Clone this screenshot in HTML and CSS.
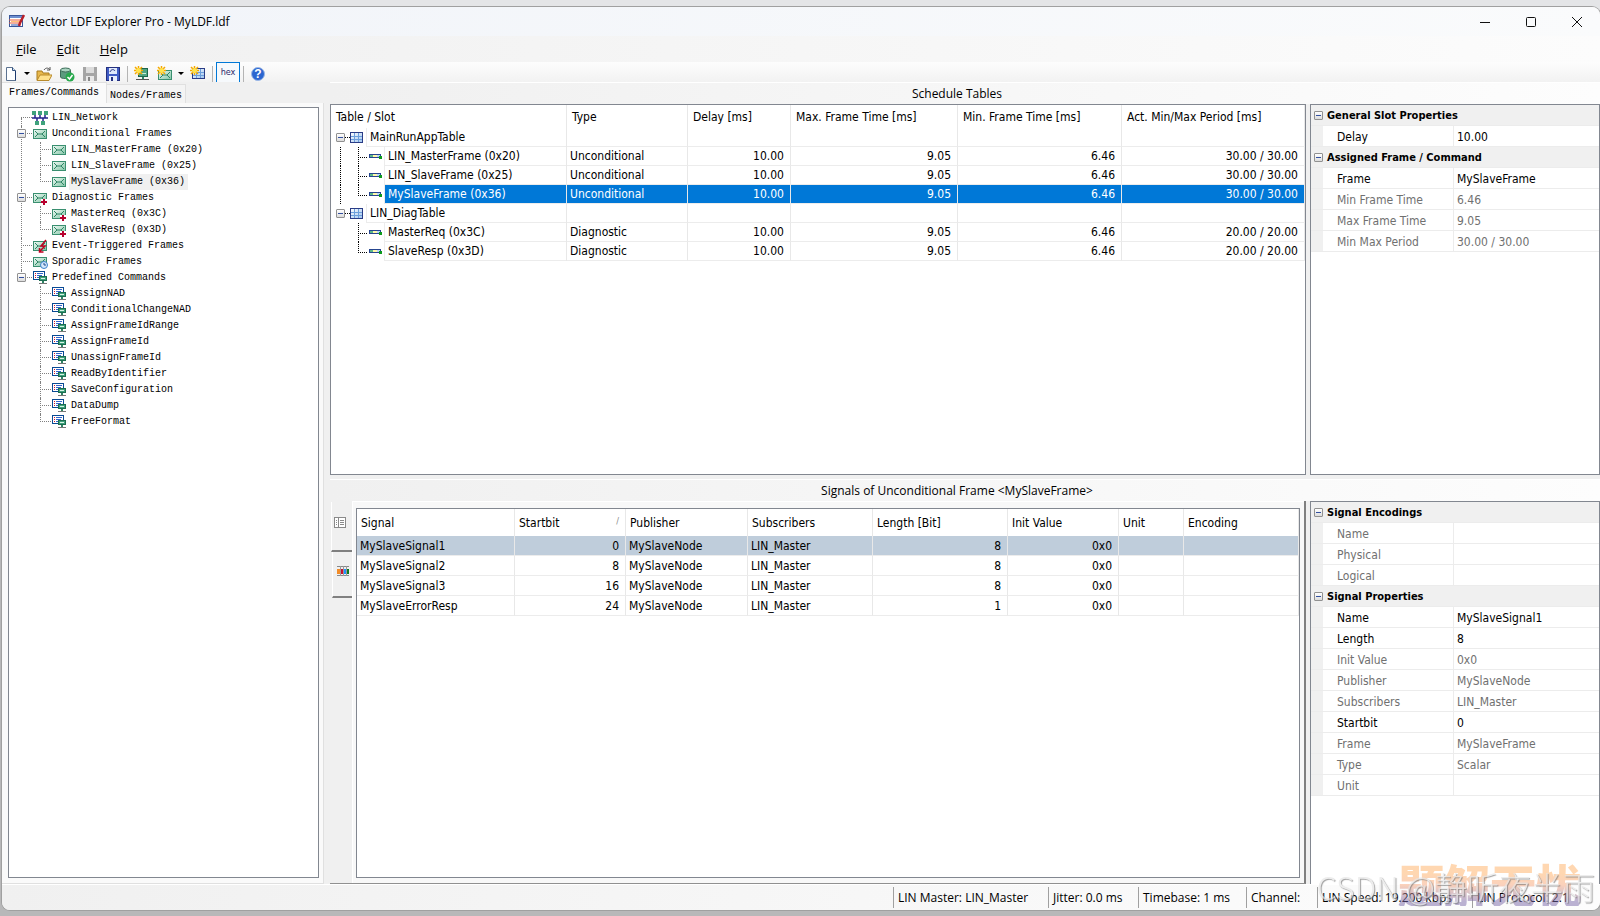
FILE: index.html
```html
<!DOCTYPE html>
<html lang="en">
<head>
  <meta charset="UTF-8">
  <title>Vector LDF Explorer Pro - MyLDF.ldf</title>
  <link rel="stylesheet" href="styles.css">
</head>
<body>
  <svg class="defs" width="0" height="0">
    <defs>
      <linearGradient id="gEnv" x1="0" y1="0" x2="1" y2="1"><stop offset="0" stop-color="#f2fbf6"/><stop offset="1" stop-color="#7fc4a4"/></linearGradient>
      <linearGradient id="gGrid" x1="0" y1="0" x2="1" y2="1"><stop offset="0" stop-color="#fff"/><stop offset="1" stop-color="#9fc4ee"/></linearGradient>
    </defs>
    <symbol id="env" viewBox="0 0 16 16">
      <rect x="1.5" y="3.5" width="13" height="9" fill="url(#gEnv)" stroke="#3a8f70"/>
      <path d="M3 5l3 3h4l3-3M3 11l3-3M13 11l-3-3" fill="none" stroke="#2f8465"/>
    </symbol>
    <symbol id="env-diag" viewBox="0 0 16 16">
      <use href="#env"/>
      <path d="M9 9h6v6H9z" fill="#fff"/>
      <path d="M12 9v6M9 12h6" stroke="#b8002e" stroke-width="2"/>
    </symbol>
    <symbol id="env-event" viewBox="0 0 16 16">
      <use href="#env"/>
      <path d="M14 2L9 8h4l-5 5M7.500 10v4h4" fill="none" stroke="#c00020" stroke-width="1.500"/>
    </symbol>
    <symbol id="env-spor" viewBox="0 0 16 16">
      <use href="#env"/>
      <circle cx="12" cy="11" r="3.500" fill="#d5e8fb" stroke="#3c82cc"/>
      <path d="M12 9v2h2" fill="none" stroke="#1d4f93"/>
    </symbol>
    <symbol id="net" viewBox="0 0 16 16">
      <path d="M0 8h16M3 5v3M8 5v3M13 5v3M5 8v4M11 8v4" stroke="#23238c" stroke-width="1.500"/>
      <path d="M0 1h4v4H0zM6 1h4v4H6zM12 1h4v4h-4zM3 11h4v4H3zM9 11h4v4H9z" fill="#3fa27c"/>
    </symbol>
    <symbol id="cmd" viewBox="0 0 16 16">
      <rect x="1.500" y="1.500" width="11" height="8" fill="#fff" stroke="#0a4a94"/>
      <path d="M3 3.500h1M3 5.500h1M3 7.500h1" stroke="#d0102a"/>
      <path d="M5 3.500h6M5 5.500h5M5 7.500h3" stroke="#3366cc"/>
      <path d="M11 10v3" stroke="#2f8465" stroke-width="2"/><path d="M7 13.500h8" stroke="#777"/>
      <rect x="7.500" y="6.500" width="7" height="4" fill="#3fa27c" stroke="#1c6d50"/>
      <path d="M9 8.500h4" stroke="#d9f3e6"/>
    </symbol>
    <symbol id="grid" viewBox="0 0 13 13">
      <rect x=".5" y="1.500" width="12" height="10" fill="url(#gGrid)" stroke="#2a3c86"/>
      <path d="M4.500 2v9M8.500 2v9M1 5.500h11M1 8.500h11" stroke="#6c9fdc"/>
    </symbol>
    <symbol id="slot" viewBox="0 0 13 7">
      <rect x="0" y="1" width="12" height="4" fill="#fff6a8"/>
      <path d="M0 1.500h12M0 4.500h10" stroke="#26458f"/>
      <path d="M1 3h3" stroke="#5cb88a" stroke-width="2"/><path d="M8 3h3" stroke="#b9d8f8" stroke-width="2"/>
      <path d="M.5 1v4M11.500 1v2" stroke="#26458f"/><rect x="10" y="3" width="3" height="3" fill="#0c9a1c"/>
    </symbol>
    <symbol id="star" viewBox="0 0 9 9">
      <path d="M4.500 0v9M0 4.500h9M1 1l7 7M8 1L1 8" stroke="#f5a800" stroke-width="1.500"/>
      <circle cx="4.500" cy="4.500" r="2.500" fill="#ffe34d"/>
    </symbol>
  </svg>

  <div class="window">
    <header class="titlebar">
      <svg width="16" height="16" viewBox="0 0 16 16">
        <rect x=".5" y="1.500" width="13" height="11" fill="#fff" stroke="#39579a"/>
        <path d="M1 3h12" stroke="#6d8fd0" stroke-width="2"/>
        <path d="M0 6h12M0 9h11" stroke="#e85d3a"/><path d="M2 7.500h9" stroke="#ffc27a"/><path d="M2 11h8" stroke="#2c56b3"/>
        <path d="M15 1l-4 8-1 3" stroke="#b8202a" stroke-width="2.500" fill="none"/>
      </svg>
      <h1>Vector LDF Explorer Pro - MyLDF.ldf</h1>
      <div class="controls">
        <button aria-label="Minimize"><svg width="12" height="12"><path d="M1 6.500h10" stroke="#111"/></svg></button>
        <button aria-label="Maximize"><svg width="12" height="12"><rect x="1.500" y="1.500" width="9" height="9" rx="1" fill="none" stroke="#111"/></svg></button>
        <button aria-label="Close"><svg width="12" height="12"><path d="M1 1l10 10M11 1L1 11" stroke="#111"/></svg></button>
      </div>
    </header>

    <nav class="menu">
      <button><u>F</u>ile</button>
      <button><u>E</u>dit</button>
      <button><u>H</u>elp</button>
    </nav>

    <div class="toolbar">
      <button class="drop" aria-label="New">
        <svg width="14" height="16"><path d="M1.500 1.500h6l3 3v10h-9z" fill="#fdfeff" stroke="#5c7290"/><path d="M10.500 5v9.500" stroke="#1c3a6e"/><path d="M7.500 1.500v3h3" fill="#cfe0f2" stroke="#34537f"/></svg>
        <i></i>
      </button>
      <button aria-label="Open">
        <svg width="16" height="16"><path d="M1 14V5h5l1 2h6v2" fill="#e8b84c" stroke="#a87a1d"/><path d="M1 14.500L4 9h12l-3 5.500z" fill="#ffe08a" stroke="#b98a2b"/><path d="M8 4c2-3 5-2 6 0M14 1v3h-3" fill="none" stroke="#555"/></svg>
      </button>
      <button aria-label="Check">
        <svg width="16" height="16"><path d="M1.500 4v7c0 2 10 2 10 0V4" fill="#5b9c7f" stroke="#3b6d58"/><ellipse cx="6.500" cy="4" rx="5" ry="2" fill="#a9d3c0" stroke="#3b6d58"/><circle cx="11" cy="11" r="4.500" fill="#27a94c"/><path d="M8.500 11l2 2 3-4" fill="none" stroke="#fff" stroke-width="1.500"/></svg>
      </button>
      <button aria-label="Save" disabled>
        <svg width="16" height="16"><rect x="1" y="1" width="14" height="14" fill="#a5a5a5"/><rect x="4" y="1" width="8" height="6" fill="#dcdcdc"/><rect x="4" y="10" width="8" height="5" fill="#e8e8e8"/><rect x="6" y="11" width="2" height="4" fill="#888"/></svg>
      </button>
      <button aria-label="Save as">
        <svg width="16" height="16"><rect x="1.500" y="1.500" width="13" height="13" fill="#3f5cc4" stroke="#24307f"/><rect x="4" y="2" width="8" height="6" fill="#dfe9fb"/><path d="M5 6c1-3 4-3 5-1" fill="none" stroke="#24307f"/><rect x="4" y="10" width="8" height="5" fill="#e8eefc"/><rect x="6" y="11" width="2" height="4" fill="#24307f"/></svg>
      </button>
      <span class="sep"></span>
      <button aria-label="New node">
        <svg width="16" height="16"><rect x="4.500" y="2.500" width="9" height="8" fill="#4fa583" stroke="#1d644a"/><path d="M9 11v2" stroke="#2f8465" stroke-width="2"/><path d="M2 13.500h13" stroke="#555"/><path d="M8 7.500h4" stroke="#c9ecdc"/><use href="#star" width="9" height="9"/></svg>
      </button>
      <button class="drop" aria-label="New frame">
        <svg width="16" height="16"><g transform="translate(0 1)"><use href="#env" width="16" height="16"/></g><use href="#star" width="9" height="9"/></svg>
        <i></i>
      </button>
      <button aria-label="New table">
        <svg width="16" height="16"><g transform="translate(2 1)"><use href="#grid" width="13" height="13"/></g><use href="#star" width="9" height="9"/></svg>
      </button>
      <span class="sep"></span>
      <button class="hex">hex</button>
      <span class="sep"></span>
      <button aria-label="Help contents">
        <svg class="help" width="16" height="16"><circle cx="8" cy="8" r="6.500" fill="#2b66d0" stroke="#9bb8e6"/><text x="8" y="12" text-anchor="middle">?</text></svg>
      </button>
    </div>

    <div class="workspace">
      <aside class="side">
        <div class="tabs">
          <button class="active">Frames/Commands</button>
          <button>Nodes/Frames</button>
        </div>
        <div class="tab-page">
          <ul class="tree">
            <li><div class="node"><svg><use href="#net"/></svg><span>LIN_Network</span></div></li>
            <li>
              <div class="node"><button class="toggle" aria-label="Collapse"></button><svg><use href="#env"/></svg><span>Unconditional Frames</span></div>
              <ul>
                <li><div class="node"><svg><use href="#env"/></svg><span>LIN_MasterFrame (0x20)</span></div></li>
                <li><div class="node"><svg><use href="#env"/></svg><span>LIN_SlaveFrame (0x25)</span></div></li>
                <li><div class="node selected"><svg><use href="#env"/></svg><span>MySlaveFrame (0x36)</span></div></li>
              </ul>
            </li>
            <li>
              <div class="node"><button class="toggle" aria-label="Collapse"></button><svg><use href="#env-diag"/></svg><span>Diagnostic Frames</span></div>
              <ul>
                <li><div class="node"><svg><use href="#env-diag"/></svg><span>MasterReq (0x3C)</span></div></li>
                <li><div class="node"><svg><use href="#env-diag"/></svg><span>SlaveResp (0x3D)</span></div></li>
              </ul>
            </li>
            <li><div class="node"><svg><use href="#env-event"/></svg><span>Event-Triggered Frames</span></div></li>
            <li><div class="node"><svg><use href="#env-spor"/></svg><span>Sporadic Frames</span></div></li>
            <li>
              <div class="node"><button class="toggle" aria-label="Collapse"></button><svg><use href="#cmd"/></svg><span>Predefined Commands</span></div>
              <ul>
                <li><div class="node"><svg><use href="#cmd"/></svg><span>AssignNAD</span></div></li>
                <li><div class="node"><svg><use href="#cmd"/></svg><span>ConditionalChangeNAD</span></div></li>
                <li><div class="node"><svg><use href="#cmd"/></svg><span>AssignFrameIdRange</span></div></li>
                <li><div class="node"><svg><use href="#cmd"/></svg><span>AssignFrameId</span></div></li>
                <li><div class="node"><svg><use href="#cmd"/></svg><span>UnassignFrameId</span></div></li>
                <li><div class="node"><svg><use href="#cmd"/></svg><span>ReadByIdentifier</span></div></li>
                <li><div class="node"><svg><use href="#cmd"/></svg><span>SaveConfiguration</span></div></li>
                <li><div class="node"><svg><use href="#cmd"/></svg><span>DataDump</span></div></li>
                <li><div class="node"><svg><use href="#cmd"/></svg><span>FreeFormat</span></div></li>
              </ul>
            </li>
          </ul>
        </div>
      </aside>

      <main class="main">
        <section class="pane schedule">
          <h2>Schedule Tables</h2>
          <div class="split">
            <div class="box">
              <table class="grid slots">
                <colgroup><col class="w-name"><col class="w-type"><col class="w-delay"><col class="w-max"><col class="w-min"><col></colgroup>
                <thead>
                  <tr><th>Table / Slot</th><th>Type</th><th>Delay [ms]</th><th>Max. Frame Time [ms]</th><th>Min. Frame Time [ms]</th><th>Act. Min/Max Period [ms]</th></tr>
                </thead>
                <tbody>
                  <tr>
                    <td class="tree-cell"><div class="group first"><button class="toggle" aria-label="Collapse"></button><svg><use href="#grid"/></svg><span>MainRunAppTable</span></div></td>
                    <td></td><td></td><td></td><td></td><td></td>
                  </tr>
                  <tr>
                    <td class="tree-cell"><div class="slot trunk"><svg><use href="#slot"/></svg><span>LIN_MasterFrame (0x20)</span></div></td>
                    <td>Unconditional</td><td class="num">10.00</td><td class="num">9.05</td><td class="num">6.46</td><td class="num">30.00 / 30.00</td>
                  </tr>
                  <tr>
                    <td class="tree-cell"><div class="slot trunk"><svg><use href="#slot"/></svg><span>LIN_SlaveFrame (0x25)</span></div></td>
                    <td>Unconditional</td><td class="num">10.00</td><td class="num">9.05</td><td class="num">6.46</td><td class="num">30.00 / 30.00</td>
                  </tr>
                  <tr class="selected">
                    <td class="tree-cell"><div class="slot trunk last"><svg><use href="#slot"/></svg><span>MySlaveFrame (0x36)</span></div></td>
                    <td>Unconditional</td><td class="num">10.00</td><td class="num">9.05</td><td class="num">6.46</td><td class="num">30.00 / 30.00</td>
                  </tr>
                  <tr>
                    <td class="tree-cell"><div class="group"><button class="toggle" aria-label="Collapse"></button><svg><use href="#grid"/></svg><span>LIN_DiagTable</span></div></td>
                    <td></td><td></td><td></td><td></td><td></td>
                  </tr>
                  <tr>
                    <td class="tree-cell"><div class="slot"><svg><use href="#slot"/></svg><span>MasterReq (0x3C)</span></div></td>
                    <td>Diagnostic</td><td class="num">10.00</td><td class="num">9.05</td><td class="num">6.46</td><td class="num">20.00 / 20.00</td>
                  </tr>
                  <tr>
                    <td class="tree-cell"><div class="slot last"><svg><use href="#slot"/></svg><span>SlaveResp (0x3D)</span></div></td>
                    <td>Diagnostic</td><td class="num">10.00</td><td class="num">9.05</td><td class="num">6.46</td><td class="num">20.00 / 20.00</td>
                  </tr>
                </tbody>
              </table>
            </div>
            <div class="box">
              <table class="props">
                <colgroup><col class="w-gutter"><col class="w-key"><col></colgroup>
                <tbody>
                  <tr class="cat"><th colspan="3"><button class="toggle" aria-label="Collapse"></button>General Slot Properties</th></tr>
                  <tr class="on"><td></td><th>Delay</th><td>10.00</td></tr>
                  <tr class="cat"><th colspan="3"><button class="toggle" aria-label="Collapse"></button>Assigned Frame / Command</th></tr>
                  <tr class="on"><td></td><th>Frame</th><td>MySlaveFrame</td></tr>
                  <tr><td></td><th>Min Frame Time</th><td>6.46</td></tr>
                  <tr><td></td><th>Max Frame Time</th><td>9.05</td></tr>
                  <tr><td></td><th>Min Max Period</th><td>30.00 / 30.00</td></tr>
                </tbody>
              </table>
            </div>
          </div>
        </section>

        <section class="pane signals">
          <h2>Signals of Unconditional Frame &lt;MySlaveFrame&gt;</h2>
          <div class="split">
            <div class="signal-tabs">
              <div class="vtabs">
                <button class="active" aria-label="Signal list">
                  <svg width="14" height="14"><rect x="1.500" y="1.500" width="11" height="10" fill="#fff" stroke="#8a8a8a"/><path d="M5.500 2v9M7 4.500h4M7 6.500h4M7 8.500h4M3 4.500h1M3 6.500h1M3 8.500h1" stroke="#8a8a8a"/></svg>
                </button>
                <button aria-label="Signal layout">
                  <svg width="14" height="14"><path d="M1 2.500h12M1 11.500h12" stroke="#888"/><path d="M1 5h3v5H1z" fill="#f28c28"/><path d="M4 5h3v5H4z" fill="#c8102e"/><path d="M7 5h3v5H7z" fill="#1e90ff"/><path d="M10 5h3v5h-3z" fill="#0a7a1c"/><path d="M4.500 2v10M7.500 2v10M10.500 2v10" stroke="#999"/></svg>
                </button>
              </div>
              <div class="signal-page">
                <div class="box">
                  <table class="grid signal-list">
                    <colgroup><col class="w-signal"><col class="w-start"><col class="w-pub"><col class="w-sub"><col class="w-len"><col class="w-init"><col class="w-unit"><col></colgroup>
                    <thead>
                      <tr><th>Signal</th><th class="sorted">Startbit</th><th>Publisher</th><th>Subscribers</th><th>Length [Bit]</th><th>Init Value</th><th>Unit</th><th>Encoding</th></tr>
                    </thead>
                    <tbody>
                      <tr class="current"><td>MySlaveSignal1</td><td class="num">0</td><td>MySlaveNode</td><td>LIN_Master</td><td class="num">8</td><td class="num">0x0</td><td></td><td></td></tr>
                      <tr><td>MySlaveSignal2</td><td class="num">8</td><td>MySlaveNode</td><td>LIN_Master</td><td class="num">8</td><td class="num">0x0</td><td></td><td></td></tr>
                      <tr><td>MySlaveSignal3</td><td class="num">16</td><td>MySlaveNode</td><td>LIN_Master</td><td class="num">8</td><td class="num">0x0</td><td></td><td></td></tr>
                      <tr><td>MySlaveErrorResp</td><td class="num">24</td><td>MySlaveNode</td><td>LIN_Master</td><td class="num">1</td><td class="num">0x0</td><td></td><td></td></tr>
                    </tbody>
                  </table>
                </div>
              </div>
            </div>
            <div class="box open">
              <table class="props">
                <colgroup><col class="w-gutter"><col class="w-key"><col></colgroup>
                <tbody>
                  <tr class="cat"><th colspan="3"><button class="toggle" aria-label="Collapse"></button>Signal Encodings</th></tr>
                  <tr><td></td><th>Name</th><td></td></tr>
                  <tr><td></td><th>Physical</th><td></td></tr>
                  <tr><td></td><th>Logical</th><td></td></tr>
                  <tr class="cat"><th colspan="3"><button class="toggle" aria-label="Collapse"></button>Signal Properties</th></tr>
                  <tr class="on"><td></td><th>Name</th><td>MySlaveSignal1</td></tr>
                  <tr class="on"><td></td><th>Length</th><td>8</td></tr>
                  <tr><td></td><th>Init Value</th><td>0x0</td></tr>
                  <tr><td></td><th>Publisher</th><td>MySlaveNode</td></tr>
                  <tr><td></td><th>Subscribers</th><td>LIN_Master</td></tr>
                  <tr class="on"><td></td><th>Startbit</th><td>0</td></tr>
                  <tr><td></td><th>Frame</th><td>MySlaveFrame</td></tr>
                  <tr><td></td><th>Type</th><td>Scalar</td></tr>
                  <tr><td></td><th>Unit</th><td></td></tr>
                </tbody>
              </table>
            </div>
          </div>
        </section>
      </main>
    </div>

    <footer class="status">
      <span class="s-master">LIN Master: LIN_Master</span>
      <span class="s-jitter">Jitter: 0.0 ms</span>
      <span class="s-time">Timebase: 1 ms</span>
      <span class="s-channel">Channel:</span>
      <span class="s-speed">LIN Speed: 19.200 kbps</span>
      <span class="s-proto">LIN Protocol: 2.1</span>
    </footer>
  </div>

  <div class="stamp">题解无忧</div>
  <div class="credit">CSDN @静听夜半雨</div>
</body>
</html>
```
FILE: styles.css
```css
* {
  box-sizing: border-box;
}
body {
  margin: 0;
  height: 100vh;
  padding: 7px 0 6px 2px;
  display: flex;
  background: linear-gradient(#e4e5e7, #e4e5e7 8px, #b8b8b9 30px);
  font-family: "DejaVu Sans Condensed", "DejaVu Sans", sans-serif;
  font-size: 12px;
  color: #000;
  overflow: hidden;
}
button {
  font: inherit;
  color: inherit;
  background: none;
  border: 0;
  padding: 0;
}
table {
  border-collapse: separate;
  border-spacing: 0;
  table-layout: fixed;
  width: 100%;
}
h1, h2, ul {
  margin: 0;
  padding: 0;
  font-weight: normal;
}
.defs {
  position: absolute;
}
.window {
  flex: 1;
  min-width: 0;
  display: flex;
  flex-direction: column;
  background: #f0f0f0;
  border-radius: 8px;
  box-shadow: 0 0 0 1px #a0a0a0;
  overflow: hidden;
}

/* title, menu, toolbar */
.titlebar {
  height: 29px;
  flex: none;
  display: flex;
  align-items: center;
  padding-left: 7px;
  gap: 6px;
  background: linear-gradient(90deg, #f1f4f9, #fafbfc);
}
.titlebar h1 {
  flex: 1;
  font-family: "Open Sans", sans-serif;
  font-size: 12px;
  line-height: 29px;
}
.controls {
  display: flex;
}
.controls button {
  width: 46px;
  height: 29px;
}
.controls svg {
  vertical-align: middle;
}
.menu {
  height: 26px;
  flex: none;
  display: flex;
  align-items: center;
  gap: 20px;
  padding-left: 14px;
  background: linear-gradient(90deg, #f0f0f0, #fcfcfc);
  font-family: "Open Sans", sans-serif;
  font-size: 13px;
}
.toolbar {
  height: 20px;
  flex: none;
  display: flex;
  align-items: flex-start;
  gap: 7px;
  padding: 4px 3px 0;
  background: linear-gradient(#fdfdfd, #f2f2f2);
  overflow: hidden;
}
.toolbar button {
  height: 16px;
  display: flex;
}
.toolbar i {
  margin: 6px 0 0 5px;
  height: 3px;
  border: 3px solid transparent;
  border-top-color: #000;
}
.toolbar .drop {
  margin-right: -1px;
}
.toolbar .sep {
  width: 1px;
  height: 16px;
  margin: 0 -1px;
  background: #b4b4b4;
}
.toolbar .hex {
  width: 24px;
  height: 24px;
  margin: -4px -3px 0;
  padding-top: 4px;
  justify-content: center;
  border: 1px solid #0078d7;
  background: #f6f9fc;
  color: #2a2a6a;
  font-size: 9px;
}
.help text {
  font: bold 12px "Liberation Sans", sans-serif;
  fill: #fff;
}

/* work area */
.workspace {
  flex: 1;
  min-height: 0;
  display: flex;
  border-bottom: 1px solid #fff;
}
.side {
  width: 322px;
  flex: none;
  display: flex;
  flex-direction: column;
  font-family: "Liberation Mono", monospace;
  font-size: 10px;
}
.tabs {
  display: flex;
  height: 21px;
  align-items: flex-end;
}
.tabs button {
  height: 19px;
  padding: 2px 3px 0;
  border: solid #e0e0e0;
  border-width: 1px 1px 0 0;
  background: #f4f4f4;
}
.tabs .active {
  height: 21px;
  padding: 0 7px 2px;
  background: #fafafa;
}
.tab-page {
  flex: 1;
  display: flex;
  padding: 4px 4px 5px 6px;
  border: solid #e0e0e0;
  border-width: 0 1px 1px 0;
  background: #fafafa;
}
.tree {
  flex: 1;
  padding: 2px 0 0 12px;
  background: #fff;
  border: 1px solid #828790;
  list-style: none;
}
.tree ul {
  list-style: none;
  margin-left: 19px;
}
.tree li {
  position: relative;
}
.tree li::before {
  content: "";
  position: absolute;
  top: 0;
  bottom: 0;
  left: 0;
  border-left: 1px dotted #808080;
}
.tree > li:first-child::before {
  top: 8px;
}
.tree li:last-child::before {
  height: 8px;
}
.node {
  position: relative;
  height: 16px;
  padding-left: 11px;
  display: flex;
  align-items: center;
}
.node::before {
  content: "";
  position: absolute;
  left: 0;
  top: 7px;
  width: 11px;
  border-top: 1px dotted #808080;
}
.node svg {
  width: 16px;
  height: 16px;
  margin-right: 2px;
}
.node span {
  padding: 0 3px 0 2px;
  line-height: 16px;
  white-space: nowrap;
}
.node.selected span {
  background: #f0f0f0;
}
.toggle {
  position: relative;
  width: 9px;
  height: 9px;
  flex: none;
  border: 1px solid #919191;
  border-radius: 1px;
  background: linear-gradient(#fff, #dcdcdc);
}
.toggle::after {
  content: "";
  position: absolute;
  left: 1px;
  right: 1px;
  top: 3px;
  height: 1px;
  background: #3350a0;
}
.node .toggle {
  position: absolute;
  left: -4px;
  top: 3px;
}

/* panes */
.main {
  flex: 1;
  min-width: 0;
  display: flex;
  flex-direction: column;
  padding-left: 6px;
}
.pane {
  display: flex;
  flex-direction: column;
}
.pane h2 {
  height: 22px;
  padding-right: 16px;
  border-top: 1px solid #fff;
  background: linear-gradient(90deg, #f0f0f0, #fdfdfd);
  font-family: "Open Sans", sans-serif;
  font-size: 12px;
  line-height: 21px;
  text-align: center;
}
.schedule {
  height: 397px;
  padding-bottom: 4px;
}
.signals {
  flex: 1;
}
.split {
  flex: 1;
  display: grid;
  grid-template-columns: 1fr 290px;
  gap: 4px;
}
.box {
  flex: 1;
  background: #fff;
  border: 1px solid #828790;
}
.box.open {
  border-bottom: 0;
}
.grid th, .grid td {
  text-align: left;
  font-weight: normal;
  white-space: nowrap;
  border-right: 1px solid #e8e8e8;
  padding: 0 6px 0 3px;
}
.grid td {
  height: 19px;
  border-bottom: 1px solid #ececec;
}
.grid th {
  height: 23px;
  padding-left: 5px;
}
.grid .num {
  text-align: right;
}
.w-name { width: 236px; }
.w-type { width: 121px; }
.w-delay { width: 103px; }
.w-max { width: 167px; }
.w-min { width: 164px; }
.grid .selected td {
  background: #0078d7;
  color: #fff;
}
.grid .tree-cell, .grid .selected .tree-cell {
  padding: 0;
  border-bottom: 0;
  background: #fff;
}
.tree-cell div {
  position: relative;
  height: 19px;
  display: flex;
  align-items: center;
}
.tree-cell span {
  flex: 1;
  line-height: 18px;
  padding-left: 3px;
  border-left: 1px solid #ececec;
  border-bottom: 1px solid #ececec;
}
.selected .tree-cell span {
  background: #0078d7;
}
.group {
  padding-left: 5px;
}
.group svg {
  width: 13px;
  height: 13px;
  margin: 0 3px 0 5px;
}
.group::before {
  content: "";
  position: absolute;
  left: 14px;
  width: 5px;
  border-top: 1px dotted #000;
}
.slot {
  padding-left: 38px;
}
.slot svg {
  width: 13px;
  height: 7px;
  margin-right: 2px;
}
.slot::before {
  content: "";
  position: absolute;
  left: 27px;
  top: 0;
  width: 8px;
  height: 10px;
  border: dotted #000;
  border-width: 0 0 1px 1px;
}
.trunk::after {
  content: "";
  position: absolute;
  left: 9px;
  top: 0;
  bottom: 0;
  border-left: 1px dotted #000;
}
.slot svg + span {
  position: relative;
}
.slot:not(.last) svg + span::before {
  content: "";
  position: absolute;
  left: -27px;
  top: 10px;
  height: 9px;
  border-left: 1px dotted #000;
}

/* property grids */
.props th, .props td {
  height: 21px;
  padding: 1px 0 0 3px;
  text-align: left;
  font-weight: normal;
  color: #707070;
  border-bottom: 1px solid #ececec;
}
.props th {
  padding-left: 14px;
  border-right: 1px solid #ececec;
}
.props td:first-child {
  background: #f0f0f0;
}
.props .on th, .props .on td {
  color: #000;
}
.props .cat th {
  padding-left: 3px;
  background: #f0f0f0;
  border-right: 0;
  color: #000;
  font-size: 11px;
  font-weight: bold;
}
.cat .toggle {
  margin-right: 4px;
}
.w-gutter { width: 12px; }
.w-key { width: 131px; }

/* signals */
.signal-tabs {
  display: flex;
  border-right: 2px solid #808080;
  border-bottom: 1px solid #909090;
}
.vtabs {
  width: 22px;
  padding-top: 1px;
}
.vtabs button {
  display: block;
  width: 20px;
  height: 46px;
  margin-left: 2px;
  padding-bottom: 4px;
  border: solid #fff;
  border-width: 0 0 2px 1px;
  border-bottom-color: #808080;
}
.vtabs .active {
  width: 21px;
  height: 50px;
  margin-left: 1px;
  padding-right: 5px;
}
.signal-page {
  flex: 1;
  display: flex;
  padding: 6px 4px 5px 3px;
  border: solid #fff;
  border-width: 1px 0 0 1px;
  background: #f8f8f8;
}
.signal-list th {
  height: 27px;
  padding-left: 4px;
}
.signal-list td {
  height: 20px;
}
.signal-list .current td {
  background: #bfcddb;
}
.sorted::after {
  content: "/";
  float: right;
  color: #888;
  font-size: 9px;
}
.w-signal { width: 158px; }
.w-start { width: 111px; }
.w-pub { width: 122px; }
.w-sub { width: 125px; }
.w-len { width: 135px; }
.w-init { width: 111px; }
.w-unit { width: 65px; }

/* status bar */
.status {
  height: 25px;
  flex: none;
  display: flex;
  align-items: center;
  justify-content: flex-end;
  background: linear-gradient(90deg, #f0f0f0, #fdfdfd);
  font-family: "Open Sans", sans-serif;
  font-size: 12px;
}
.status span {
  height: 21px;
  padding-left: 4px;
  border-left: 1px solid #a0a0a0;
  line-height: 21px;
  white-space: nowrap;
}
.s-master { width: 155px; }
.s-jitter { width: 90px; }
.s-time { width: 108px; }
.s-channel { width: 71px; }
.s-speed { width: 155px; }
.s-proto { width: 128px; }

/* overlays */
.stamp, .credit {
  position: absolute;
  pointer-events: none;
  white-space: nowrap;
  font-family: "Noto Sans CJK SC", sans-serif;
}
.stamp {
  right: 18px;
  bottom: 10px;
  font-size: 46px;
  line-height: 46px;
  font-weight: 900;
  background: linear-gradient(#ffb066 30%, #f7a57c 55%, #7a68a8 90%);
  background-clip: text;
  -webkit-background-clip: text;
  color: transparent;
  opacity: 0.5;
}
.credit {
  right: 5px;
  bottom: 10px;
  font-size: 32px;
  line-height: 40px;
  font-weight: 300;
  color: #e6e6e6;
  text-shadow: 1px 1px 1px #777;
  opacity: 0.7;
}
```
